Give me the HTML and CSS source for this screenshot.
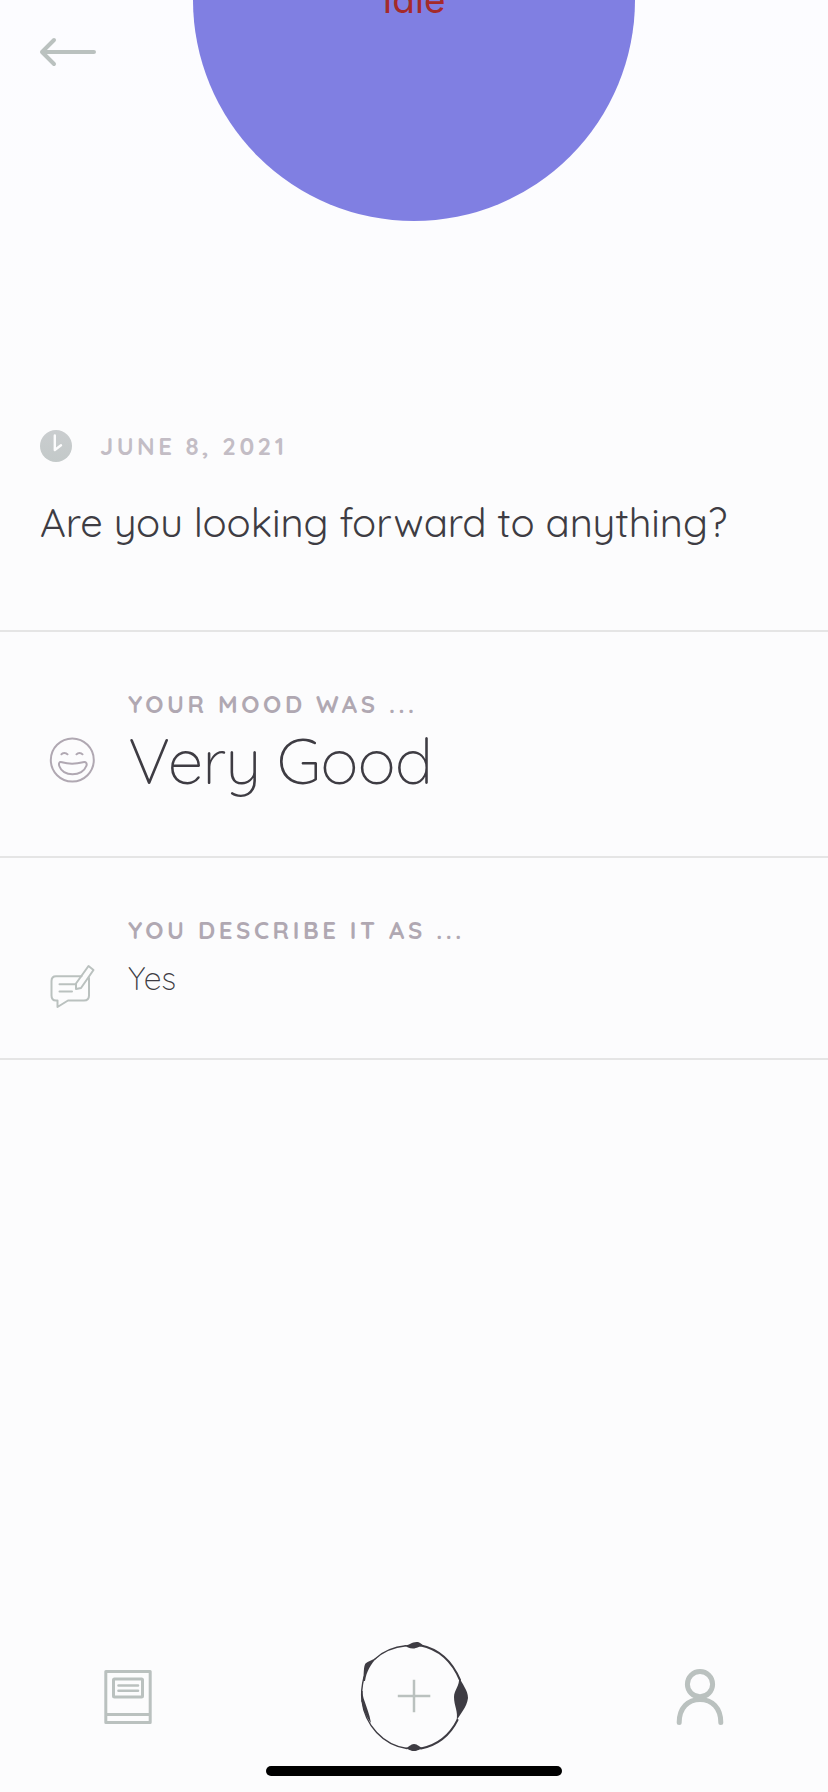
FILE: index.html
```html
<!DOCTYPE html>
<html lang="en">
<head>
<meta charset="utf-8">
<title>Mood entry</title>
<link rel="stylesheet" href="styles.css">
</head>
<body>
<div class="screen">
  <header class="hero">
    <svg class="back" width="60" height="32" viewBox="0 0 60 32"><path d="M56 16H4M16 4 4 16 16 28"/></svg>
    <div class="orb"><span class="orb-label">Idle</span></div>
  </header>
  <section class="question">
    <div class="date-row">
      <svg class="clock" width="32" height="32" viewBox="0 0 32 32"><defs><linearGradient id="cg" x1="0" y1="0" x2="0" y2="1"><stop offset="0" stop-color="#cacdcf"/><stop offset="1" stop-color="#c3c9c9"/></linearGradient></defs><circle cx="16" cy="16" r="16" fill="url(#cg)" stroke="none"/><path d="M14.8 5.500V20L21 15.300"/></svg>
      <span class="label date">JUNE 8, 2021</span>
    </div>
    <h1 class="title">Are you looking forward to anything?</h1>
  </section>
  <section class="entry mood">
    <svg class="entry-icon face" width="46" height="46" viewBox="0 0 46 46"><circle cx="23.300" cy="23" r="21.500"/><path d="M12.500 17.300C13.500 15.500 17 15.500 18.500 17.300M27.500 17.300C29 15.500 32 15.500 33.500 17.300M13 25.200C19 27 27 27 34 25.200C37.500 24.500 38.200 27 37.300 29C35.500 34 30 37.300 23.500 37.300C17 37.300 12 34 10.500 29.500C9.300 26.500 10.200 24.300 13 25.200Z"/></svg>
    <div class="entry-text">
      <span class="label mood-label">YOUR MOOD WAS ...</span>
      <span class="mood-value">Very Good</span>
    </div>
  </section>
  <section class="entry note">
    <svg class="entry-icon comment" width="46" height="46" viewBox="0 0 46 46"><path d="M32.500 12.200H7Q2.500 12.200 2.500 17V31.500Q2.500 36.500 7 36.500H8.500V43L19 36.500H35Q40 36.500 40 31.500V14"/><path d="M10.500 20.200H27M10.500 27.500H23"/><path d="M39.500 2 44.500 6 32 24 27 25V19.500Z"/></svg>
    <div class="entry-text">
      <span class="label note-label">YOU DESCRIBE IT AS ...</span>
      <span class="note-value">Yes</span>
    </div>
  </section>
  <nav class="tabs">
    <svg class="tab book" width="48" height="56" viewBox="0 0 48 56"><path d="M1.800 2.500H46.200V53.500H1.800ZM1.800 45.500H46.200"/><rect x="9.500" y="10" width="29" height="18" rx="1"/><path d="M14.500 16.500H34M14.500 21.800H34" stroke-width="2.600"/></svg>
    <svg class="tab add" width="110" height="110" viewBox="0 0 110 110">
      <g class="ring">
        <path d="M47 4.800C35 6 24 10.500 16 18"/>
        <path d="M5 36C2.500 46 2 52 3 60"/>
        <path d="M3 60C6 84 24 104 48 107.500"/>
        <path class="heavy" d="M62 107.500C79 104 91 94 98.500 79"/>
        <path class="heavy" d="M61 4.200C80 8 93 20 101 39"/>
      </g>
      <g class="ink">
        <path d="M45 4.500C50 4.500 53 1 57.500 1C61 1 62 3 65 5C60 5 58 7.500 54 7.500C50 7.500 48 5.500 45 4.500Z"/>
        <path d="M18 16.500C13 19.500 9 20 6.500 22.500C4.500 25 5 32 4.200 40L6 40C7.500 30 12 23 18 16.500Z"/>
        <path d="M2.200 50C1.800 62 5 73 12 82C10.500 73 7.500 66 5.500 60C4 56 3.600 53 3.600 50Z"/>
        <path d="M100 36C103 43 109 49 109 57C108 66 101 73 97.500 80C99.500 70 95 65 95 56C95 49 101 45 100 36Z"/>
        <path d="M46 107C50 106.500 51.500 103 55 103C59 103 60 106.500 65 107C60 108 59 110 55 110C51 110 50 108 46 107Z"/>
      </g>
      <path class="plus" d="M38.800 55H71.300M55 38.700V71.300"/>
    </svg>
    <svg class="tab person" width="50" height="60" viewBox="0 0 50 60"><circle cx="25" cy="17.200" r="12.600"/><path d="M4.200 55.500C4.200 41 13 32.500 25 32.500S45.800 41 45.800 55.500"/></svg>
  </nav>
  <div class="home-indicator"></div>
</div>
</body>
</html>
```
FILE: styles.css
```css
body {
  margin: 0;
  background: #fcfcfd;
  color: #3e3c43;
  font-family: Quicksand, Lato, sans-serif;
}
svg {
  display: block;
  fill: none;
  stroke: #bac1bf;
  stroke-linecap: round;
  stroke-linejoin: round;
  flex: none;
}
.screen {
  width: 828px;
  height: 1792px;
  overflow: hidden;
  display: flex;
  flex-direction: column;
  background: linear-gradient(#fcfcff, #fcfcfd 450px);
}
.hero {
  height: 430px;
  box-sizing: border-box;
  padding: 36px 38px 0;
  position: relative;
  flex: none;
}
.back { stroke-width: 4; }
.orb {
  position: absolute;
  left: 193px;
  top: -221px;
  width: 442px;
  height: 442px;
  border-radius: 50%;
  background: #807fe2;
  display: flex;
  align-items: center;
  justify-content: center;
}
.orb-label {
  font-family: Inter, "Liberation Sans", sans-serif;
  font-size: 37px;
  line-height: 44px;
  color: #a52a2a;
}
.question {
  height: 200px;
  padding: 0 40px;
  border-bottom: 2px solid #e5e5e5;
  flex: none;
}
.date-row {
  display: flex;
  align-items: center;
  gap: 28px;
  height: 32px;
}
.clock path {
  stroke: #fcfcfd;
  stroke-width: 2.4;
}
.label {
  font-size: 24px;
  line-height: 30px;
  font-weight: 700;
  letter-spacing: 3.6px;
  color: #b0a8b2;
  white-space: nowrap;
}
.date {
  color: #c3bdc5;
  letter-spacing: 3.45px;
}
.title {
  margin: 35px 0 0;
  font-size: 40px;
  line-height: 50px;
  font-weight: 400;
  letter-spacing: -0.07px;
  white-space: nowrap;
}
.entry {
  display: flex;
  padding: 0 49px;
  gap: 33px;
  border-bottom: 2px solid #e5e5e5;
  flex: none;
}
.mood { height: 224px; }
.note { height: 200px; }
.entry-text {
  display: flex;
  flex-direction: column;
  padding-top: 57px;
}
.entry-icon { stroke-width: 2; }
.face { margin-top: 105px; stroke: #b0a8b2; }
.comment { margin-top: 106px; }
.mood-value {
  margin-top: 1px;
  font-size: 64px;
  line-height: 80px;
  font-weight: 300;
  letter-spacing: -0.9px;
  white-space: nowrap;
}
.note-value {
  font-size: 32px;
  line-height: 40px;
  font-weight: 300;
  letter-spacing: -0.4px;
  margin-top: 13px;
}
.tabs {
  margin-top: auto;
  height: 110px;
  padding: 0 103px 0 104px;
  display: flex;
  align-items: center;
  justify-content: space-between;
  flex: none;
}
.tab { stroke-width: 3; }
.book, .person { margin-top: 2px; }
.person { stroke-width: 5; }
.ring { stroke: #3e3c43; stroke-width: 1.4; }
.heavy { stroke-width: 2; }
.ink { fill: #3e3c43; stroke: none; }
.plus { stroke-width: 2.5; stroke-linecap: butt; }
.home-indicator {
  width: 296px;
  height: 10px;
  margin: 15px auto 16px;
  border-radius: 5px;
  background: #000;
  flex: none;
}
```
